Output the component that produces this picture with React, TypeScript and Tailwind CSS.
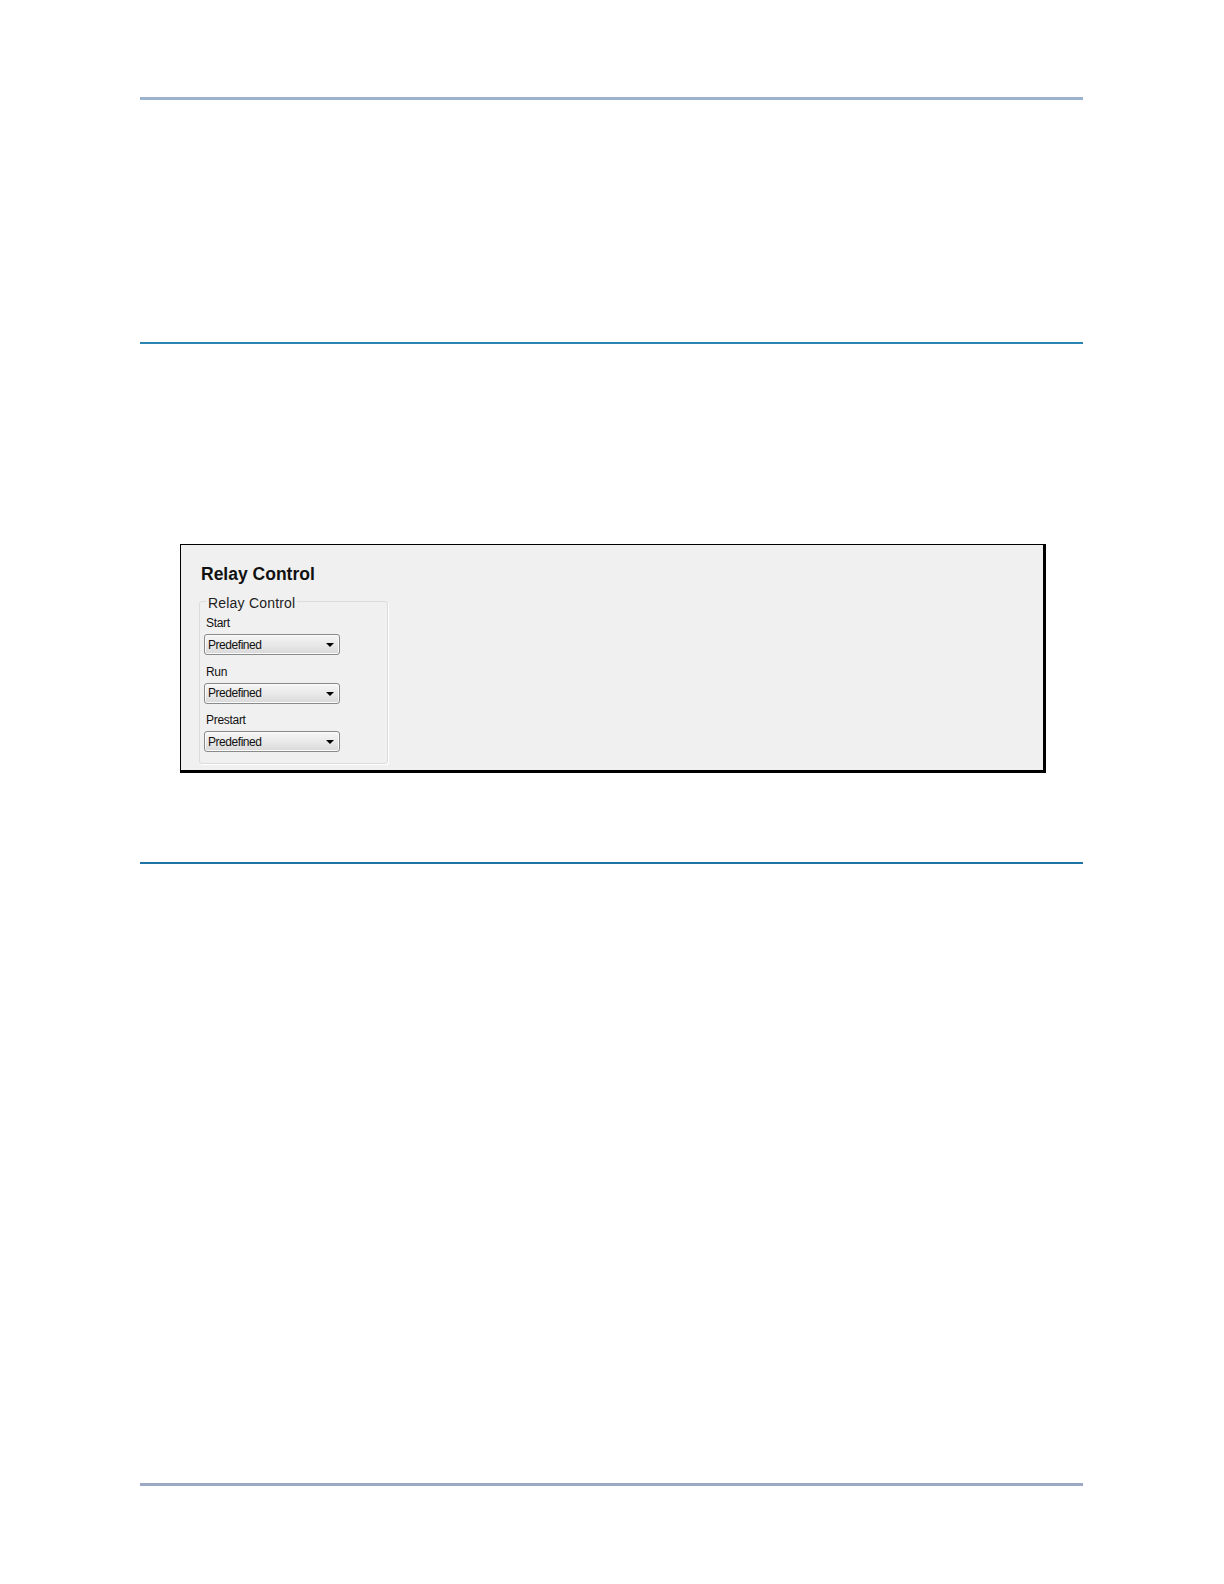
import React from "react";

const fields = ["Start", "Run", "Prestart"];

function Dropdown() {
  return (
    <div className="relative w-[136px] h-[21px] rounded-[3px] border border-[#8a8a8a] bg-gradient-to-b from-[#f6f6f6] via-[#e9e9e9] to-[#d9d9d9] shadow-[inset_0_0_0_1px_#fafafa] flex items-center pl-[3px]">
      <span className="text-[12px] leading-none text-[#111] tracking-[-0.45px]">Predefined</span>
      <svg className="absolute right-[5px] top-[8px]" width="8" height="4" viewBox="0 0 8 4">
        <path d="M0 0H8L4 4Z" fill="#000" />
      </svg>
    </div>
  );
}

export default function App() {
  return (
    <div className="w-[1224px] h-[1584px] bg-white font-['Liberation_Sans',Arial,sans-serif]">
      <div className="pt-[97px] pl-[140px] pr-[141px]">
        <div className="h-[3px] bg-[#9cb2cf]" />
        <div className="h-[242px]" />
        <div className="h-[2px] bg-[#2a85b0]" />

        <div className="pt-[200px] pl-[40px] pr-[37px]">
          <div className="h-[229px] border-t border-l border-black border-r-[3px] border-b-[3px] bg-[#f0f0f0] pl-[18px] pt-[19px]">
            <h1 className="pl-[2px] text-[17.5px] font-bold text-[#111] leading-[20px]">Relay Control</h1>
            <div className="relative mt-[17px] w-[189px] h-[163px] border border-[#dcdcdc] rounded-[3px] pl-[4px] pt-[14px] shadow-[1px_1px_0_#fff]">
              <span className="absolute -top-[8px] left-[6px] px-[2px] bg-[#f0f0f0] text-[14px] leading-[18px] text-[#222] tracking-[0.2px]">
                Relay Control
              </span>
              {fields.map((f, i) => (
                <div key={f} className={i > 0 ? "mt-[9.5px]" : ""}>
                  <div className="pl-[2px] text-[12px] leading-[15px] text-[#111] tracking-[-0.3px] mb-[3px]">{f}</div>
                  <Dropdown />
                </div>
              ))}
            </div>
          </div>
        </div>

        <div className="h-[89px]" />
        <div className="h-[2px] bg-[#1f73a5]" />
        <div className="h-[619px]" />
        <div className="h-[3px] bg-[#9ba9c6]" />
      </div>
    </div>
  );
}
